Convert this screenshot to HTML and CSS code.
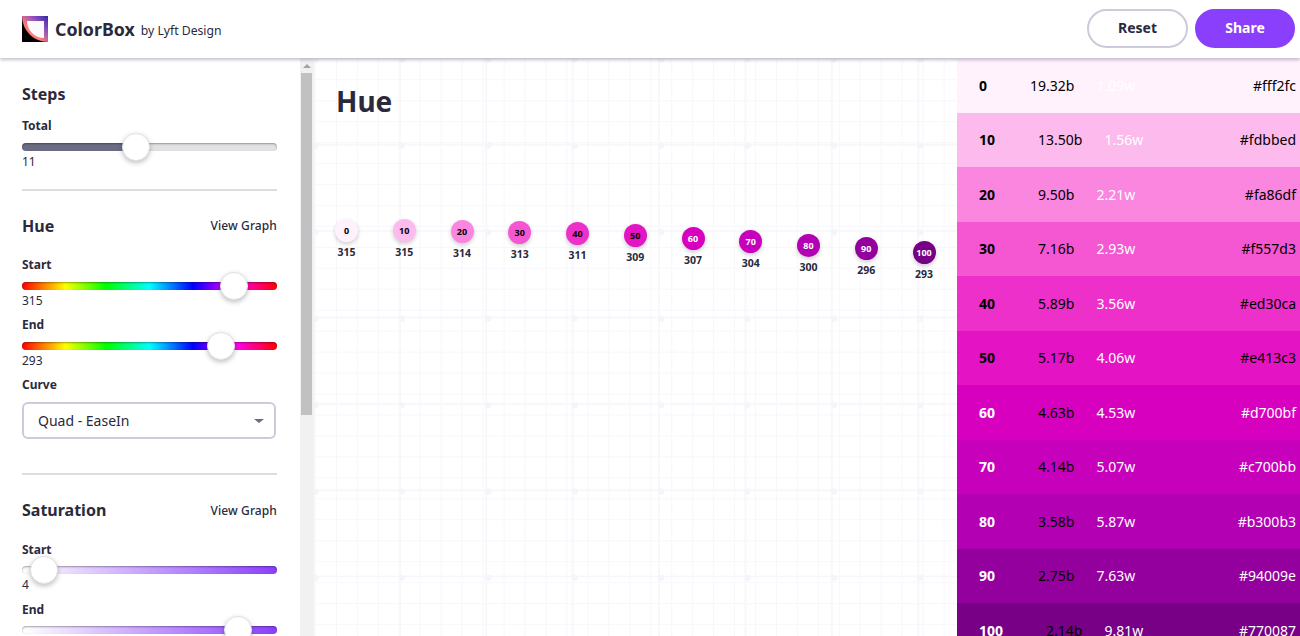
FILE: index.html
```html
<!DOCTYPE html>
<html lang="en">
<head>
  <meta charset="UTF-8" />
  <title>ColorBox by Lyft Design</title>
  <link rel="stylesheet" href="styles.css">
</head>

<body>
  <!-- Top bar -->
  <header class="topbar">
    <div class="brand">
      <svg class="logo" width="26" height="26" viewBox="0 0 26 26">
        <defs>
          <linearGradient id="logo-band" x1="1" y1="0" x2="0" y2="1">
            <stop offset="0" stop-color="#33289a" />
            <stop offset="0.3" stop-color="#8a4fc4" />
            <stop offset="0.62" stop-color="#ff7d72" />
          </linearGradient>
        </defs>
        <rect width="26" height="26" fill="#000" />
        <path d="M0 0H26V26A26 26 0 0 1 0 0Z" fill="url(#logo-band)" />
        <path d="M5 5H22V22A17 17 0 0 1 5 5Z" fill="#fbf9ff" />
      </svg>
      <span class="brand-name">ColorBox</span>
      <span class="brand-by">by Lyft Design</span>
    </div>
    <div class="actions">
      <button class="btn btn-reset">Reset</button>
      <button class="btn btn-share">Share</button>
    </div>
  </header>

  <div class="workspace">
    <!-- Left controls -->
    <aside class="sidebar">
      <section class="group">
        <h2 class="group-title steps-title">Steps</h2>
        <div class="field-label first">Total</div>
        <div class="slider track-steps"><span class="thumb" style="left: 44.7%"></span></div>
        <div class="field-value">11</div>
      </section>

      <section class="group">
        <div class="group-head">
          <h2 class="group-title">Hue</h2>
          <a class="graph-link">View Graph</a>
        </div>
        <div class="field-label">Start</div>
        <div class="slider track-hue"><span class="thumb" style="left: 83.2%"></span></div>
        <div class="field-value">315</div>
        <div class="field-label">End</div>
        <div class="slider track-hue"><span class="thumb" style="left: 78.1%"></span></div>
        <div class="field-value">293</div>
        <div class="field-label">Curve</div>
        <div class="select">Quad - EaseIn</div>
      </section>

      <section class="group">
        <div class="group-head">
          <h2 class="group-title">Saturation</h2>
          <a class="graph-link">View Graph</a>
        </div>
        <div class="field-label">Start</div>
        <div class="slider track-sat"><span class="thumb" style="left: 8.6%"></span></div>
        <div class="field-value">4</div>
        <div class="field-label">End</div>
        <div class="slider track-sat"><span class="thumb" style="left: 84.7%"></span></div>
      </section>
    </aside>

    <div class="scrollbar">
      <div class="scroll-arrow"></div>
      <div class="scroll-thumb"></div>
    </div>

    <!-- Chart area -->
    <main class="canvas">
      <h1 class="canvas-title">Hue</h1>
      <div class="dots">
        <div class="dot-col" style="margin-top: 0px"><div class="dot" style="background: #fff2fc">0</div><div class="dot-value">315</div></div>
        <div class="dot-col" style="margin-top: 0px"><div class="dot" style="background: #fdbbed">10</div><div class="dot-value">315</div></div>
        <div class="dot-col" style="margin-top: 1px"><div class="dot" style="background: #fa86df">20</div><div class="dot-value">314</div></div>
        <div class="dot-col" style="margin-top: 2px"><div class="dot" style="background: #f557d3">30</div><div class="dot-value">313</div></div>
        <div class="dot-col" style="margin-top: 3px"><div class="dot" style="background: #ed30ca">40</div><div class="dot-value">311</div></div>
        <div class="dot-col" style="margin-top: 5px"><div class="dot" style="background: #e413c3">50</div><div class="dot-value">309</div></div>
        <div class="dot-col" style="margin-top: 8px"><div class="dot light" style="background: #d700bf">60</div><div class="dot-value">307</div></div>
        <div class="dot-col" style="margin-top: 11px"><div class="dot light" style="background: #c700bb">70</div><div class="dot-value">304</div></div>
        <div class="dot-col" style="margin-top: 15px"><div class="dot light" style="background: #b300b3">80</div><div class="dot-value">300</div></div>
        <div class="dot-col" style="margin-top: 18px"><div class="dot light" style="background: #94009e">90</div><div class="dot-value">296</div></div>
        <div class="dot-col" style="margin-top: 22px"><div class="dot light" style="background: #770087">100</div><div class="dot-value">293</div></div>
      </div>
    </main>

    <!-- Palette -->
    <div class="palette">
      <div class="swatch" style="background: #fff2fc"><b class="step">0</b><span class="on-black">19.32b</span><span class="on-white">1.09w</span><span class="hex">#fff2fc</span></div>
      <div class="swatch" style="background: #fdbbed"><b class="step">10</b><span class="on-black">13.50b</span><span class="on-white">1.56w</span><span class="hex">#fdbbed</span></div>
      <div class="swatch" style="background: #fa86df"><b class="step">20</b><span class="on-black">9.50b</span><span class="on-white">2.21w</span><span class="hex">#fa86df</span></div>
      <div class="swatch" style="background: #f557d3"><b class="step">30</b><span class="on-black">7.16b</span><span class="on-white">2.93w</span><span class="hex">#f557d3</span></div>
      <div class="swatch" style="background: #ed30ca"><b class="step">40</b><span class="on-black">5.89b</span><span class="on-white">3.56w</span><span class="hex">#ed30ca</span></div>
      <div class="swatch" style="background: #e413c3"><b class="step">50</b><span class="on-black">5.17b</span><span class="on-white">4.06w</span><span class="hex">#e413c3</span></div>
      <div class="swatch dark" style="background: #d700bf"><b class="step">60</b><span class="on-black">4.63b</span><span class="on-white">4.53w</span><span class="hex">#d700bf</span></div>
      <div class="swatch dark" style="background: #c700bb"><b class="step">70</b><span class="on-black">4.14b</span><span class="on-white">5.07w</span><span class="hex">#c700bb</span></div>
      <div class="swatch dark" style="background: #b300b3"><b class="step">80</b><span class="on-black">3.58b</span><span class="on-white">5.87w</span><span class="hex">#b300b3</span></div>
      <div class="swatch dark" style="background: #94009e"><b class="step">90</b><span class="on-black">2.75b</span><span class="on-white">7.63w</span><span class="hex">#94009e</span></div>
      <div class="swatch dark" style="background: #770087"><b class="step">100</b><span class="on-black">2.14b</span><span class="on-white">9.81w</span><span class="hex">#770087</span></div>
    </div>
  </div>
</body>
</html>
```

FILE: styles.css
```css
* {
  box-sizing: border-box;
}

body {
  margin: 0;
  height: 100vh;
  display: flex;
  flex-direction: column;
  overflow: hidden;
  font-family: "Noto Sans", "Open Sans", sans-serif;
  color: #2a2a3c;
  background-color: #ffffff;
}

/* Top bar */
.topbar {
  height: 58px;
  flex: none;
  display: flex;
  align-items: center;
  justify-content: space-between;
  padding: 0 5px 1px 22px;
  background-color: #ffffff;
  box-shadow: 0 2px 3px rgba(60, 60, 90, 0.3);
  position: relative;
  z-index: 2;
}

.brand {
  display: flex;
  align-items: center;
}

.brand-name {
  margin-left: 7px;
  font-size: 17.8px;
  font-weight: 700;
}

.brand-by {
  margin-left: 6px;
  margin-top: 3px;
  font-size: 12.2px;
}

.actions {
  display: flex;
  gap: 7px;
}

.btn {
  width: 101px;
  height: 39px;
  padding: 0 0 2px;
  border-radius: 20px;
  border: 2px solid #cccadb;
  font-family: inherit;
  font-size: 14px;
  font-weight: 700;
  color: #2a2a3c;
  background-color: #ffffff;
}

.btn-share {
  width: 100px;
  border-color: #8a3ffc;
  background-color: #8a3ffc;
  color: #ffffff;
}

.workspace {
  flex: 1;
  display: flex;
  min-height: 0;
}

/* Sidebar */
.sidebar {
  width: 300px;
  flex: none;
  padding: 0 23px 0 22px;
  overflow: hidden;
  background-color: #ffffff;
}

.scrollbar {
  width: 14px;
  flex: none;
  background-color: #f1f1f1;
}

.scroll-arrow {
  height: 15px;
  display: flex;
  justify-content: center;
  padding-top: 6px;
}

.scroll-arrow::before {
  content: "";
  height: 0;
  border-left: 4px solid transparent;
  border-right: 4px solid transparent;
  border-bottom: 4px solid #a3a3a3;
}

.scroll-thumb {
  height: 342px;
  width: 11px;
  margin-left: 1px;
  background-color: #c1c1c1;
}

.group {
  padding: 25px 0 34px;
  border-bottom: 2px solid #dddddf;
}

.group:first-child {
  padding-top: 26px;
  padding-bottom: 19px;
}

.group:last-child {
  border-bottom: none;
}

.group-head {
  display: flex;
  align-items: center;
  justify-content: space-between;
}

.group-title {
  margin: 0;
  font-size: 16px;
  line-height: 20px;
  font-weight: 700;
}

.graph-link {
  font-size: 12px;
  font-weight: 500;
  letter-spacing: 0.1px;
}

.field-label {
  margin-top: 8.5px;
  font-size: 12px;
  line-height: 16px;
  font-weight: 700;
}

.group-head + .field-label {
  margin-top: 21.5px;
}

.field-label.first {
  margin-top: 14px;
}

.slider {
  height: 8px;
  margin-top: 8.5px;
  border-radius: 4px;
  position: relative;
  box-shadow: inset 0 1px 2px rgba(0, 0, 0, 0.35);
}

.track-steps {
  background: linear-gradient(to right, #6c6c86 44.7%, #e2e2e4 44.7%);
}

.track-hue {
  background: linear-gradient(to right, #ff0000, #ffff00 17%, #00ff00 33%, #00ffff 50%, #0000ff 67%, #ff00ff 83%, #ff0000);
}

.track-sat {
  background: linear-gradient(to right, #ffffff, #8a3ffc);
}

.thumb {
  position: absolute;
  top: 50%;
  width: 28px;
  height: 28px;
  margin: -14px 0 0 -14px;
  border-radius: 50%;
  background-color: #ffffff;
  border: 1px solid #e2e2e6;
  box-shadow: 0 2px 5px rgba(0, 0, 0, 0.25);
}

.field-value {
  margin-top: 3px;
  font-size: 12px;
  line-height: 16px;
}

.select {
  height: 37px;
  width: 254px;
  margin-top: 9px;
  padding: 0 14px;
  display: flex;
  align-items: center;
  justify-content: space-between;
  border: 2px solid #cccadb;
  border-radius: 6px;
  font-size: 14px;
}

.select::after {
  content: "";
  margin-right: -4px;
  border-left: 5px solid transparent;
  border-right: 5px solid transparent;
  border-top: 4px solid #6c6c80;
}

/* Grid canvas */
.canvas {
  flex: 1;
  min-width: 0;
  padding: 25px 0 0 21px;
  background-color: #ffffff;
  background-image:
    radial-gradient(circle at 3px 3px, #f4f4fa 3px, transparent 3px),
    linear-gradient(to right, #f7f7fc 2px, transparent 2px),
    linear-gradient(to bottom, #f7f7fc 2px, transparent 2px),
    linear-gradient(to right, #f7f7fc 1px, transparent 1px),
    linear-gradient(to bottom, #f7f7fc 1px, transparent 1px);
  background-size: 86.4px 86.4px, 86.4px 100%, 100% 86.4px, 20.96px 100%, 100% 20.96px;
  background-position: -1.5px -1.5px, -1.5px 0, 0 -0.7px, 1px 0, 0 0.3px;
}

.canvas-title {
  margin: 0 0 0 1px;
  height: 136px;
  font-size: 28px;
  line-height: 36px;
  font-weight: 700;
}

.dots {
  display: flex;
  gap: 34.75px;
}

.dot-col {
  width: 23px;
  display: flex;
  flex-direction: column;
  align-items: center;
}

.dot {
  width: 23px;
  height: 23px;
  border-radius: 50%;
  display: flex;
  align-items: center;
  justify-content: center;
  font-size: 9px;
  font-weight: 700;
  color: #000000;
  box-shadow: 0 2px 4px rgba(0, 0, 0, 0.2);
}

.dot.light {
  color: #ffffff;
}

.dot-value {
  margin-top: 3px;
  font-size: 10.5px;
  line-height: 14px;
  font-weight: 700;
}

/* Palette */
.palette {
  width: 343px;
  flex: none;
  overflow: hidden;
}

.swatch {
  height: 54.5px;
  display: flex;
  align-items: center;
  padding: 0 4px 0 22px;
  font-size: 14px;
  color: #000000;
}

.step {
  margin-right: 43px;
}

.on-white {
  margin-left: 22px;
  color: #ffffff;
}

.hex {
  margin-left: auto;
}

.swatch.dark .step,
.swatch.dark .hex {
  color: #ffffff;
}
```
